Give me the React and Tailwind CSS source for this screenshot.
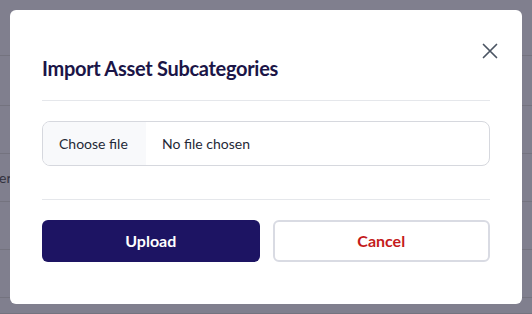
import React from 'react';

const rows = [56, 50, 48, 48, 48, 48, 16];

function XIcon() {
  return (
    <svg width="16" height="16" viewBox="0 0 16 16" fill="none" stroke="#4b5563" strokeWidth="1.7" strokeLinecap="round">
      <path d="M1.5 1.5l13 13M14.5 1.5l-13 13" />
    </svg>
  );
}

export default function App() {
  return (
    <div className="relative w-[532px] h-[314px] overflow-hidden bg-[#807f8e] font-['Lato','Liberation_Sans',sans-serif]">
      {/* page behind the dimmed overlay */}
      <div className="flex flex-col">
        {rows.map((h, i) => (
          <div
            key={i}
            style={{ height: h }}
            className="flex items-center border-b border-[#74737f] text-[14px] text-[#34333f]"
          >
            {i === 3 && <span className="-ml-[31px]">Owner</span>}
          </div>
        ))}
      </div>

      {/* modal */}
      <div className="absolute inset-0 p-[10px]">
        <div className="relative h-full rounded-md bg-white px-8 pt-[44px]">
          <button className="absolute right-[24px] top-[33px] text-[#4b5563]">
            <XIcon />
          </button>

          <h2 className="border-b border-[#e5e7eb] pb-[18px] text-[20px] leading-[28px] font-bold tracking-[-0.3px] text-[#1b1547]">
            Import Asset Subcategories
          </h2>

          <div className="border-b border-[#e5e7eb] pt-5 pb-[33px]">
            <div className="flex h-[45px] items-stretch overflow-hidden rounded-lg border border-[#d6d8de] text-[14px] text-[#1f2937]">
              <span className="flex w-[103px] items-center bg-[#f8f9fb] pl-4">Choose file</span>
              <span className="flex items-center pl-[16px]">No file chosen</span>
            </div>
          </div>

          <div className="grid grid-cols-2 gap-[13px] pt-5">
            <button className="h-[42px] rounded-md bg-[#1d1463] text-[16px] font-bold text-white">
              Upload
            </button>
            <button className="h-[42px] rounded-md border-2 border-[#d9dbe3] bg-white text-[16px] font-bold text-[#c41b1b]">
              Cancel
            </button>
          </div>
        </div>
      </div>
    </div>
  );
}
